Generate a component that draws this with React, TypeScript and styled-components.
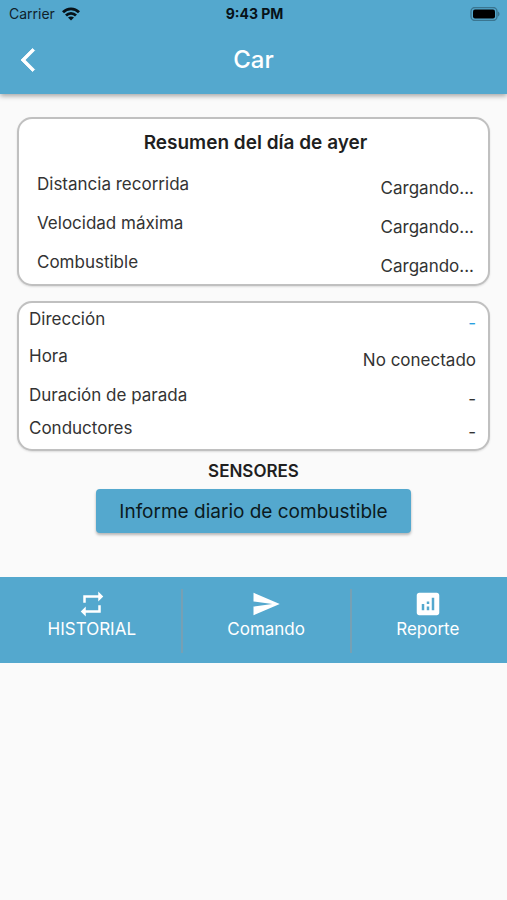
import React from "react";
import styled, { createGlobalStyle } from "styled-components";

const BLUE = "#54a8ce";

const GlobalStyle = createGlobalStyle`
  *, *::before, *::after { box-sizing: border-box; }
  body {
    margin: 0;
    background: #fafafa;
    color: #333333;
    font-family: Inter, "Liberation Sans", sans-serif;
    font-size: 16px;
    line-height: 20px;
  }
  button { font: inherit; cursor: pointer; }
`;

const Header = styled.header`
  background: ${BLUE};
  box-shadow: 0 2px 5px rgba(0, 0, 0, 0.35);
`;

const StatusBar = styled.div`
  display: grid;
  grid-template-columns: 1fr auto 1fr;
  align-items: center;
  height: 26px;
  padding: 2px 7px 0 9px;
  color: #10222b;
  font-size: 14px;
`;

const Carrier = styled.span`
  display: flex;
  align-items: center;
  gap: 7px;
`;

const Clock = styled.time`
  color: #071218;
  font-size: 14px;
  font-weight: 700;
`;

const Battery = styled.svg`
  justify-self: end;
`;

const TitleBar = styled.div`
  display: grid;
  grid-template-columns: 56px 1fr 56px;
  align-items: center;
  height: 68px;
`;

const BackButton = styled.button`
  display: flex;
  align-items: center;
  justify-content: center;
  height: 56px;
  padding: 0;
  border: 0;
  background: none;
  color: #ffffff;
`;

const Title = styled.h1`
  margin: 0;
  color: #ffffff;
  font-size: 24px;
  font-weight: 500;
  line-height: 32px;
  text-align: center;
`;

const Content = styled.main`
  display: flex;
  flex-direction: column;
  padding: 23px 17px 44px;
`;

const Card = styled.section<{ $left: number; $right: number }>`
  padding: 6px ${(p) => p.$right}px 7px ${(p) => p.$left}px;
  border: 2px solid #c0c0c0;
  border-radius: 15px;
  background: #ffffff;
  box-shadow: 0 1px 2px rgba(0, 0, 0, 0.12);

  & + & { margin-top: 15px; }
`;

const CardTitle = styled.h2`
  margin: 8px 0 21px;
  color: #1f1f1f;
  font-size: 19px;
  font-weight: 600;
  line-height: 20px;
  text-align: center;
`;

const Details = styled.dl`
  margin: 0;
`;

const Row = styled.div<{ $height: number }>`
  display: flex;
  justify-content: space-between;
  min-height: ${(p) => p.$height}px;
`;

const Label = styled.dt`
  font-size: 17px;
`;

const Value = styled.dd<{ $accent?: boolean }>`
  margin: 0;
  padding-top: 4px;
  color: ${(p) => (p.$accent ? "#2a9fe0" : "inherit")};
  font-size: 17px;
`;

const SectionTitle = styled.h2`
  margin: 10px 0 8px;
  color: #1f1f1f;
  font-size: 17px;
  font-weight: 600;
  line-height: 20px;
  text-align: center;
`;

const ReportButton = styled.button`
  align-self: center;
  height: 44px;
  padding: 2px 23px 0;
  border: 0;
  border-radius: 4px;
  background: ${BLUE};
  box-shadow: 0 2px 3px rgba(0, 0, 0, 0.28);
  color: #0b1a21;
  font-size: 19px;
`;

const BottomBar = styled.nav`
  display: flex;
  height: 86px;
  padding: 12px 3px;
  background: ${BLUE};
`;

const Action = styled.button`
  display: flex;
  flex: 1 1 auto;
  flex-direction: column;
  align-items: center;
  height: 64px;
  padding: 0;
  border: 0;
  background: none;
  color: #ffffff;
  font-size: 17px;

  &:not(:last-child) { border-right: 2px solid #76a0b4; }
`;

const ActionText = styled.span`
  line-height: 20px;
`;

type Item = { label: string; value: string; height: number; accent?: boolean };

const summary: Item[] = [
  { label: "Distancia recorrida", value: "Cargando...", height: 39 },
  { label: "Velocidad máxima", value: "Cargando...", height: 39 },
  { label: "Combustible", value: "Cargando...", height: 25 },
];

const status: Item[] = [
  { label: "Dirección", value: "-", height: 37, accent: true },
  { label: "Hora", value: "No conectado", height: 39 },
  { label: "Duración de parada", value: "-", height: 33 },
  { label: "Conductores", value: "-", height: 24 },
];

const actions = [
  {
    label: "HISTORIAL",
    path: "M7 7h10v3l4-4-4-4v3H5v6h2V7zm10 10H7v-3l-4 4 4 4v-3h12v-6h-2v4z",
  },
  { label: "Comando", path: "M2.01 21L23 12 2.01 3 2 10l15 2-15 2z" },
  {
    label: "Reporte",
    path: "M19 3H5c-1.1 0-2 .9-2 2v14c0 1.1.9 2 2 2h14c1.1 0 2-.9 2-2V5c0-1.1-.9-2-2-2zM9 17H7v-5h2v5zm4 0h-2v-3h2v3zm0-5h-2v-2h2v2zm4 5h-2V7h2v10z",
  },
];

function DetailList({ items }: { items: Item[] }) {
  return (
    <Details>
      {items.map((item) => (
        <Row key={item.label} $height={item.height}>
          <Label>{item.label}</Label>
          <Value $accent={item.accent}>{item.value}</Value>
        </Row>
      ))}
    </Details>
  );
}

function WifiIcon() {
  return (
    <svg width="18" height="14" viewBox="0 0 18 14" fill="none" stroke="#071218" strokeWidth="2.8" aria-hidden="true">
      <path d="M1 5.2C5.4 .7 12.6 .7 17 5.2" />
      <path d="M4 8.5C6.8 5.7 11.2 5.7 14 8.5" />
      <path d="M9 13.6 6 10.6C7.7 9.1 10.3 9.1 12 10.6Z" fill="#071218" stroke="none" />
    </svg>
  );
}

export default function App() {
  return (
    <>
      <GlobalStyle />
      <Header>
        <StatusBar>
          <Carrier>
            Carrier
            <WifiIcon />
          </Carrier>
          <Clock>9:43 PM</Clock>
          <Battery width="30" height="14" viewBox="0 0 30 14" aria-hidden="true">
            <rect x="1" y=".5" width="26" height="13" rx="4" fill="none" stroke="#3a7590" strokeWidth="1.4" />
            <rect x="3" y="2.5" width="22" height="9" rx="2" fill="#000000" />
            <path d="M28 4.5c2 .7 2 4.3 0 5z" fill="#3a7590" />
          </Battery>
        </StatusBar>
        <TitleBar>
          <BackButton type="button" aria-label="Atrás">
            <svg width="28" height="28" viewBox="-6 0 24 24" fill="currentColor" stroke="currentColor" strokeWidth="0.7" strokeLinejoin="round" aria-hidden="true">
              <path d="M11.67 3.87L9.9 2.1 0 12l9.9 9.9 1.77-1.77L3.54 12z" />
            </svg>
          </BackButton>
          <Title>Car</Title>
        </TitleBar>
      </Header>
      <Content>
        <Card $left={18} $right={14}>
          <CardTitle>Resumen del día de ayer</CardTitle>
          <DetailList items={summary} />
        </Card>
        <Card $left={10} $right={12}>
          <DetailList items={status} />
        </Card>
        <SectionTitle>SENSORES</SectionTitle>
        <ReportButton type="button">Informe diario de combustible</ReportButton>
      </Content>
      <BottomBar>
        {actions.map((action) => (
          <Action key={action.label} type="button">
            <svg width="30" height="30" viewBox="0 0 24 24" fill="currentColor" aria-hidden="true">
              <path d={action.path} />
            </svg>
            <ActionText>{action.label}</ActionText>
          </Action>
        ))}
      </BottomBar>
    </>
  );
}
